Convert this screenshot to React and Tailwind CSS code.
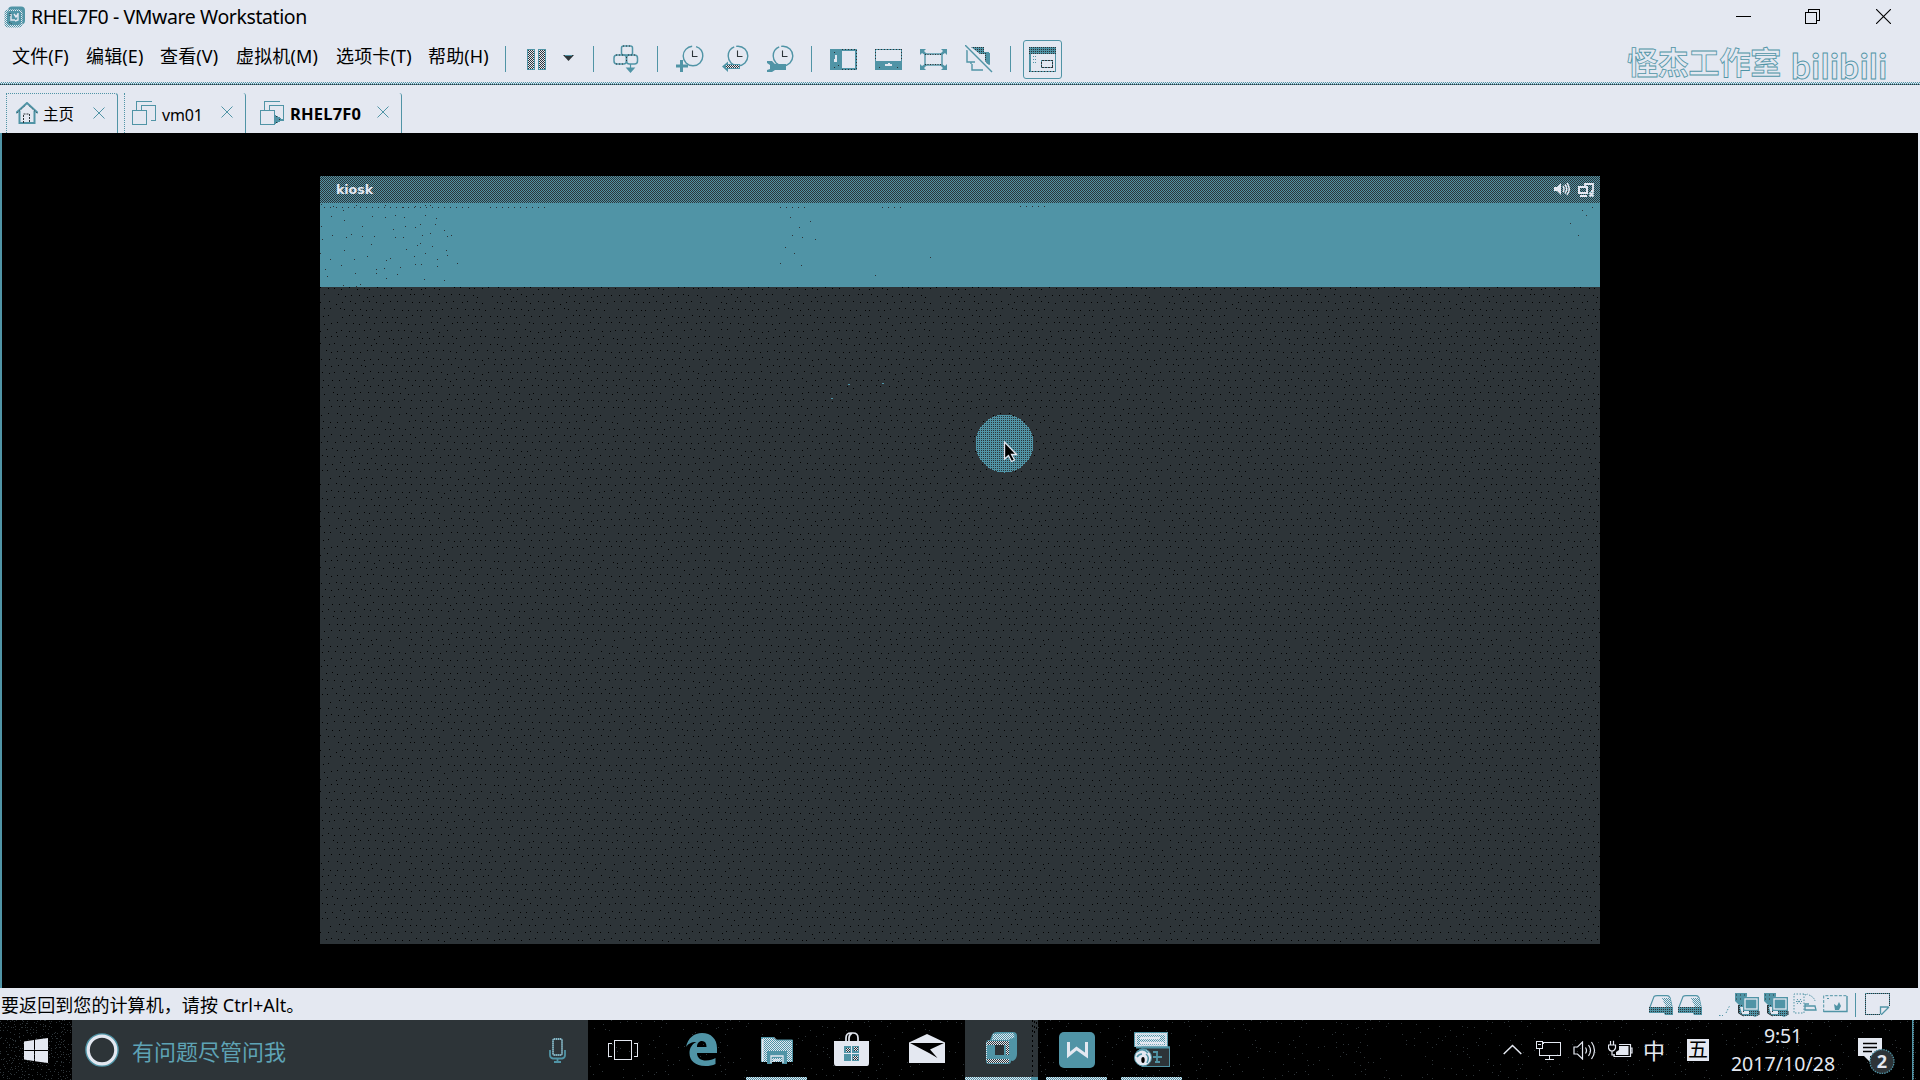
import React from "react";

const TEAL = "#5094a6";
const SLATE = "#2d3438";
const PALE = "#e4e8f1";

function Svg({ w, h, className = "", children, ...rest }) {
  return (
    <svg width={w} height={h} viewBox={`0 0 ${w} ${h}`} fill="none" className={`block shrink-0 ${className}`} {...rest}>
      {children}
    </svg>
  );
}

// Deterministic scattered specks on a jittered grid.
function speckPath(w, h, step, keep, seed, jitter) {
  let s = seed;
  const rnd = () => {
    s = (s * 1664525 + 1013904223) % 4294967296;
    return s / 4294967296;
  };
  let d = "";
  for (let y = 0; y < h; y += step) {
    for (let x = 0; x < w; x += step) {
      const shift = jitter < 0.6 && (y / step) % 2 ? step / 2 : 0;
      const px = Math.floor(x + shift + rnd() * step * jitter);
      const py = Math.floor(y + rnd() * step * jitter);
      if (rnd() < keep) d += `M${px} ${py}h1v1h-1z`;
    }
  }
  return d;
}

function Specks({ id, color, size, step, keep = 1, seed = 7, jitter = 0.8, className = "" }) {
  const d = React.useMemo(() => speckPath(size, size, step, keep, seed, jitter), [size, step, keep, seed, jitter]);
  return (
    <svg className={`pointer-events-none absolute inset-0 h-full w-full ${className}`} shapeRendering="crispEdges">
      <defs>
        <pattern id={id} width={size} height={size} patternUnits="userSpaceOnUse">
          <path d={d} fill={color} />
        </pattern>
      </defs>
      <rect width="100%" height="100%" fill={`url(#${id})`} />
    </svg>
  );
}

function SharedPatterns() {
  return (
    <svg width="0" height="0" className="absolute">
      <defs>
        <pattern id="chk-dark" width="2" height="2" patternUnits="userSpaceOnUse">
          <rect width="2" height="2" fill={PALE} />
          <path d="M0 0h1v1h-1zM1 1h1v1h-1z" fill={SLATE} />
        </pattern>
        <pattern id="chk-teal" width="2" height="2" patternUnits="userSpaceOnUse">
          <rect width="2" height="2" fill={PALE} />
          <path d="M0 0h1v1h-1zM1 1h1v1h-1z" fill={TEAL} />
        </pattern>
        <pattern id="chk-mix" width="2" height="2" patternUnits="userSpaceOnUse">
          <rect width="2" height="2" fill={TEAL} />
          <path d="M0 0h1v1h-1z" fill={SLATE} />
        </pattern>
      </defs>
    </svg>
  );
}

/* ---------- title bar ---------- */

function TitleBar() {
  return (
    <div className="flex h-9 items-start">
      <Svg w={22} h={22} className="ml-1 mt-1.5">
        <rect x="4" y="0.5" width="17" height="18" rx="4" fill={TEAL} />
        <rect x="0.5" y="3.5" width="18" height="18" rx="4" fill="url(#chk-teal)" />
        <rect x="3" y="5" width="14" height="14" rx="3" fill={TEAL} />
        <path d="M7 8v6h4M14 7v7l-3 1M10 8l2 3 2-3" stroke={PALE} strokeWidth="1.4" />
        <path d="M5 16l3 2M6 7v4" stroke={SLATE} strokeDasharray="1 1" />
      </Svg>
      <div className="ml-[5px] mt-[3px] text-[19.5px] leading-7 tracking-[-0.4px]">RHEL7F0 - VMware Workstation</div>
      <Svg w={15} h={15} className="ml-auto mt-[9px]" shapeRendering="crispEdges">
        <path d="M0 7.5h15" stroke="#000" />
      </Svg>
      <Svg w={15} h={15} className="ml-[54px] mt-[9px]" shapeRendering="crispEdges">
        <path d="M.5 3.5h11v11h-11zM3.5 3V.5h11v11H12" stroke="#000" />
      </Svg>
      <Svg w={15} h={15} className="ml-[56px] mr-[29px] mt-[9px]">
        <path d="M0 0l15 15M15 0L0 15" stroke="#000" strokeWidth="1.1" />
      </Svg>
    </div>
  );
}

/* ---------- menu + toolbar ---------- */

function Sep({ className = "" }) {
  return <div className={`h-[26px] w-px shrink-0 bg-[#5094a6] ${className}`} />;
}

function Clock({ children, dash }) {
  return (
    <Svg w={28} h={28}>
      <circle cx="17" cy="11" r="9.8" stroke={TEAL} strokeWidth="1.4" strokeDasharray={dash} />
      <path d="M16.5 5.5v6h5" stroke={SLATE} strokeWidth="1.1" />
      {children}
    </Svg>
  );
}

function MenuBar() {
  return (
    <div className="flex h-[46px] items-start">
      <div className="flex h-[40px] w-[505px] items-center whitespace-nowrap text-[18px] tracking-[0.15px]">
        <span className="ml-[12px] w-[74px]">文件(F)</span>
        <span className="w-[74px]">编辑(E)</span>
        <span className="w-[76px]">查看(V)</span>
        <span className="w-[100px]">虚拟机(M)</span>
        <span className="w-[92px]">选项卡(T)</span>
        <span>帮助(H)</span>
      </div>
      <div className="flex h-[46px] items-center">
        <Sep />
        <Svg w={20} h={21} className="ml-[21px]" shapeRendering="crispEdges">
          <rect x=".5" y=".5" width="7" height="20" fill="url(#chk-dark)" stroke={TEAL} />
          <rect x="11.5" y=".5" width="7" height="20" fill="url(#chk-dark)" stroke={TEAL} />
        </Svg>
        <Svg w={12} h={6} className="-mt-0.5 ml-4">
          <path d="M0 0h11L5.500 6z" fill={SLATE} />
          <path d="M2 .5h7" stroke={TEAL} />
        </Svg>
        <Sep className="ml-[18px]" />
        <Svg w={26} h={28} className="ml-[19px]">
          <rect x="8.500" y="1" width="11" height="9" rx="2" stroke={TEAL} strokeWidth="1.5" />
          <rect x="1" y="10" width="12.500" height="9" rx="3" stroke={TEAL} strokeWidth="1.500" />
          <rect x="13.500" y="10" width="11" height="9" rx="3" stroke={TEAL} strokeWidth="1.500" />
          <path d="M10 1h8M3 10h8M15 10h8M3 19h8M13.500 12v6" stroke={SLATE} strokeDasharray="1 2" />
          <path d="M17.500 19v6M14 23h7l-3.500 4z" stroke={TEAL} fill={TEAL} strokeWidth="1.200" />
        </Svg>
        <Sep className="ml-[18px]" />
        <div className="ml-[18px] flex gap-[17px]">
          <Clock dash="45 4 30">
            <path d="M5.500 15v12M0 21h12" stroke={TEAL} strokeWidth="3" />
          </Clock>
          <Clock dash="42 2 30">
            <path d="M1 21.500l6-5v2.500h12v5H7v3z" fill={TEAL} />
            <rect x="5" y="20" width="13" height="3" fill="url(#chk-dark)" />
          </Clock>
          <Clock dash="42 2 30">
            <path d="M1 16h5l3 3h11v6H9l-3 2H1v-2l3-1v-4l-3-2z" fill={TEAL} />
          </Clock>
        </div>
        <Sep className="ml-[17px]" />
        <Svg w={27} h={21} className="ml-[18px]" shapeRendering="crispEdges">
          <rect x="1" y="1" width="25" height="19" stroke={TEAL} strokeWidth="2" />
          <path d="M0 0h12v21H0z" fill={TEAL} />
          <path d="M12 .5h15M12 20.500h15M26.500 1v19" stroke={SLATE} strokeDasharray="1 2" />
          <path d="M6 6v7M5 10v3" stroke={PALE} strokeWidth="2" />
          <path d="M4 3h1v1h-1zM8 16h1v1h-1zM4 18h1v1h-1z" fill={SLATE} />
        </Svg>
        <Svg w={27} h={21} className="ml-[18px]" shapeRendering="crispEdges">
          <rect x=".5" y=".5" width="26" height="20" stroke={TEAL} />
          <path d="M0 12h27v9H0z" fill={TEAL} />
          <path d="M.5 0v12M26.500 0v12M0 .5h27" stroke={SLATE} strokeDasharray="1 2" />
          <path d="M10 16h7M13 15h2" stroke={PALE} strokeWidth="2" />
          <path d="M4 18h1v1h-1zM22 18h1v1h-1z" fill={SLATE} />
        </Svg>
        <Svg w={27} h={21} className="ml-[18px]">
          <path d="M0 0h6L4 2l3 3-2 1-3-2-2 2zM27 0h-6l2 2-3 3 2 1 3-2 2 2zM0 21h6l-2-2 3-3-2-1-3 2-2-2zM27 21h-6l2-2-3-3 2-1 3 2 2-2z" fill={TEAL} />
          <rect x="5" y="5" width="17" height="11" fill={PALE} stroke={TEAL} strokeWidth="1.400" />
          <path d="M5 5.500h17M5 15.500h17" stroke={SLATE} strokeDasharray="1 1.500" />
        </Svg>
        <Svg w={28} h={28} className="ml-[18px]">
          <path d="M2 5v12h4v2M7 19v6h11M10 17H3" stroke={TEAL} strokeWidth="1.400" />
          <path d="M6 2h13v5h5v13l-4-4V9h-5z" fill="url(#chk-mix)" />
          <path d="M22 8h3v12l-4-2z" fill={TEAL} />
          <path d="M0 0l27 27" stroke={PALE} strokeWidth="4" />
          <path d="M0 0l27 27" stroke={TEAL} strokeWidth="1.400" />
        </Svg>
        <Sep className="ml-[17px]" />
        <div className="ml-3 flex h-[39px] w-[39px] items-center justify-center rounded-[3px] border border-[#5094a6]">
          <Svg w={27} h={25} shapeRendering="crispEdges">
            <rect x=".75" y=".75" width="25.500" height="23.500" stroke={TEAL} strokeWidth="1.500" />
            <rect width="27" height="7" fill="url(#chk-mix)" />
            <path d="M0 24.500h27" stroke={SLATE} strokeDasharray="1 2" />
            <rect x="12.500" y="13.500" width="11" height="7" stroke={TEAL} />
            <rect x="12.500" y="13.500" width="11" height="7" stroke={SLATE} strokeDasharray="2 1" />
            <path d="M4 9h3M4 12h3M4 15h3" stroke={TEAL} strokeDasharray="1 1" />
          </Svg>
        </div>
      </div>
      <div className="ml-auto flex items-start">
        <div className="mt-[3px] whitespace-nowrap text-[31px] font-bold leading-[46px] tracking-[-0.2px] text-transparent [-webkit-text-stroke:0.8px_#5094a6]">
          怪杰工作室
        </div>
        <div className="ml-2.5 mr-[36px] mt-[9px] w-[93px] whitespace-nowrap font-[Lato] text-[35px] font-bold leading-10 tracking-[0.5px] text-transparent [-webkit-text-stroke:0.9px_#5094a6]">
          bilibili
        </div>
      </div>
    </div>
  );
}

/* ---------- tabs ---------- */

function TabClose({ className = "" }) {
  return (
    <Svg w={12} h={12} className={className}>
      <path d="M.5.5l11 11M11.500.5l-11 11" stroke={TEAL} strokeWidth="1" />
    </Svg>
  );
}

function VmIcon({ play }) {
  return (
    <Svg w={25} h={25} shapeRendering="crispEdges">
      <path d="M4.500 9V.5h15M9.500 9V4.500h14v15h-5" stroke={TEAL} />
      <rect x=".5" y="9.500" width="14" height="14" fill={PALE} stroke={TEAL} />
      {play && <path d="M14 13l9 5.500-9 5.500z" fill={TEAL} />}
      {play && <path d="M16 15h1v1h-1zM19 18h1v1h-1zM16 21h1v1h-1z" fill={SLATE} />}
    </Svg>
  );
}

function TabStrip() {
  return (
    <div className="flex h-12 items-end">
      <div className="ml-1.5 flex h-10 w-[112px] items-center rounded-tr-[3px] border-l border-r border-t border-dotted border-[#5094a6] [border-right-style:solid]">
        <Svg w={22} h={22} className="ml-[9px] -mt-0.5">
          <path d="M0 11L11 1l11 10M3.500 9v12h15V9" stroke={TEAL} strokeWidth="2" />
          <path d="M7.500 21v-9h6v9" stroke={SLATE} strokeDasharray="2 1" />
          <path d="M1 11l9-8M21 11l-9-8" stroke={SLATE} strokeWidth=".8" strokeDasharray="1 2" />
        </Svg>
        <span className="ml-[5px] mt-[3px] w-[50px] text-[15.500px]">主页</span>
        <TabClose className="-mt-0.5" />
      </div>
      <div className="ml-1.5 flex h-10 w-[122px] items-center rounded-tr-[3px] border-l border-r border-dotted border-[#5094a6] [border-right-style:solid]">
        <div className="ml-[7px] mt-px"><VmIcon /></div>
        <span className="ml-[5px] mt-[3px] w-[59px] text-[16px] tracking-[-0.2px]">vm01</span>
        <TabClose className="-mt-0.5" />
      </div>
      <div className="flex h-10 w-[156px] items-center rounded-tr-[3px] border-r border-[#5094a6]">
        <div className="ml-[14px] mt-px"><VmIcon play /></div>
        <span className="ml-[5px] mt-[3px] w-[87px] text-[16.500px] font-bold tracking-[0.2px]">RHEL7F0</span>
        <TabClose className="-mt-0.5" />
      </div>
    </div>
  );
}

/* ---------- guest screen ---------- */

function GuestScreen() {
  return (
    <div className="relative mx-auto mt-[43px] flex h-[768px] w-[1280px] flex-col overflow-hidden bg-[#2d3438]">
      <div className="flex h-[27px] shrink-0 items-center bg-[conic-gradient(#5094a6_25%,#2d3438_0_50%,#5094a6_0_75%,#2d3438_0)] bg-[length:2px_2px]">
        <span className="ml-4 mt-0.5 font-['DejaVu_Sans'] text-[12.500px] font-bold leading-none text-[#e4e8f1]">kiosk</span>
        <Svg w={16} h={14} className="-mt-px ml-auto">
          <path d="M0 5h3l4-4v12L3 9H0z" fill={PALE} />
          <path d="M9 4q2 3 0 6M11 2.500q3.500 4.500 0 9M13 1q4.500 6 0 12" stroke={PALE} strokeWidth="1.500" />
        </Svg>
        <Svg w={17} h={15} className="ml-2 mr-[5px] mt-px">
          <path d="M7 3V1h8v7h-2" stroke={PALE} strokeWidth="1.800" />
          <rect x="1" y="4" width="8" height="6" stroke={PALE} strokeWidth="2" />
          <path d="M2 13h7M11.500 9.500l4 4M15.500 9.500l-4 4" stroke={PALE} strokeWidth="2" />
        </Svg>
      </div>
      <div className="relative h-21 shrink-0 bg-[#5094a6]">
        <div className="relative h-full w-[140px]">
          <Specks id="sp-banner" color={SLATE} size={140} step={10} keep={0.62} seed={21} />
        </div>
        <Svg w={1280} h={84} className="absolute left-0 top-0" shapeRendering="crispEdges">
          <path d="M4 4.500h150M170 4.500h60M460 4.500h30M562 4.500h24M700 3.500h30" stroke={SLATE} strokeDasharray="1 5" />
          <path d="M470 14h1M479 24h1M472 32h1M482 34h1M465 44h1M474 50h1M460 60h1M481 62h1M490 18h1M495 36h1M610 54h1M555 72h1M1250 20h1M1258 32h1M1266 12h1M1272 4h1M1262 7h1" stroke={SLATE} />
        </Svg>
      </div>
      <div className="relative flex-1">
        <Specks id="sp-desk" color="#000" size={224} step={7} keep={0.97} seed={99} jitter={0.45} />
        <div className="absolute left-[655px] top-[127px]">
          <Svg w={60} h={60}>
            <circle cx="29.500" cy="29.500" r="29" fill="url(#chk-mix)" shapeRendering="crispEdges" />
            <path d="M29.500 28v17l4-3.500 3 6 3-1.500-3-5.500h5z" fill="#000" stroke={PALE} strokeWidth="1.300" />
          </Svg>
        </div>
        <Svg w={60} h={140} className="absolute left-[510px] top-[60px]" shapeRendering="crispEdges">
          <path d="M1 51h2M18 37h2M52 36h2" stroke={TEAL} />
        </Svg>
      </div>
    </div>
  );
}

/* ---------- status bar ---------- */

function Disk() {
  return (
    <Svg w={24} h={21}>
      <path d="M1 12L5 1.500Q6 .7 8 .7h10q2 0 3 2L23 12" stroke={TEAL} strokeWidth="1.200" />
      <path d="M13 3h8l2 9h-6z" fill="url(#chk-teal)" />
      <path d="M0 12h24v6H0z" fill="url(#chk-mix)" />
      <path d="M13 14h11v6h-8z" fill="url(#chk-mix)" />
    </Svg>
  );
}

function NetAdapter() {
  return (
    <Svg w={25} h={24}>
      <path d="M0 0h12v3l-2 9H4L0 8z" fill={TEAL} />
      <path d="M1 2h10M1 6h8" stroke={SLATE} strokeDasharray="1 3" />
      <path d="M3 12h6v7h8l3 4H9l-6-3z" fill="url(#chk-mix)" />
      <path d="M5 14h3v5h6v2H7z" fill={PALE} />
      <path d="M14 16h10v6l-4 2-6-3z" fill="url(#chk-mix)" />
      <path d="M8 4h16v14H8z" fill={TEAL} />
      <rect x="10" y="6" width="12" height="10" stroke={PALE} strokeWidth="1.300" />
      <path d="M3.500 12v8l5 3M24 18v4" stroke={SLATE} />
    </Svg>
  );
}

function StatusBar() {
  return (
    <div className="flex h-8 items-center">
      <div className="mt-0.5 whitespace-nowrap pl-px text-[18px] tracking-[0.08px]">要返回到您的计算机，请按 Ctrl+Alt。</div>
      <div className="ml-auto mt-0.5 flex items-center">
        <Disk />
        <div className="ml-[5px]"><Disk /></div>
        <Svg w={13} h={24} className="ml-[17px]">
          <path d="M0 22.500h4M7 20l4-8" stroke={TEAL} strokeDasharray="1.500 1.500" />
        </Svg>
        <div className="ml-[3px]"><NetAdapter /></div>
        <div className="ml-1"><NetAdapter /></div>
        <Svg w={25} h={22} className="-mt-0.5 ml-1">
          <path d="M11 1H1v19h10z" stroke={TEAL} strokeDasharray="1.500 1.500" />
          <path d="M4 6l4 5M8 6l-4 5M3 8.500h6M12 2l3-1M16 2q5 2 6 6" stroke={TEAL} strokeDasharray="1.500 1" />
          <path d="M12 13h10l1 4H12zM12 17v-6h4" stroke={TEAL} strokeWidth="1.300" />
        </Svg>
        <Svg w={25} h={18} className="-mt-0.5 ml-[5px]">
          <path d="M.7 17V.7H24" stroke={TEAL} strokeDasharray="3 1.500" />
          <path d="M.5 16.500h23.500V1" stroke={TEAL} strokeWidth="1.400" />
          <path d="M11 9l3 2 2-4 2 4-2 4h-4z" fill={TEAL} />
          <path d="M4 3.500h2" stroke={TEAL} />
        </Svg>
        <div className="ml-[7px] h-6 w-px bg-[#5094a6]" />
        <Svg w={25} h={22} className="-mt-0.5 ml-[9px] mr-[30px]" shapeRendering="crispEdges">
          <path d="M24 13V.5H.5v21H15" stroke={TEAL} />
          <path d="M24 13V.5H.5v21H15" stroke={SLATE} strokeDasharray="1 1" />
          <path d="M15.500 21v-7h8M24 14l-8 8" stroke={TEAL} strokeWidth="1.300" shapeRendering="auto" />
        </Svg>
      </div>
    </div>
  );
}

/* ---------- taskbar ---------- */

function RunLine({ className = "" }) {
  return (
    <div className={`absolute bottom-0 h-[3px] bg-[conic-gradient(#e4e8f1_25%,#5094a6_0_50%,#e4e8f1_0_75%,#5094a6_0)] bg-[length:2px_2px] ${className}`} />
  );
}

function TaskItem({ active, running, children }) {
  return (
    <div className={`relative flex h-full w-[73px] shrink-0 items-center justify-center ${active ? "bg-[#2d3438]" : ""}`}>
      {children}
      {running && <RunLine className={active ? "left-0 w-[66px]" : "left-1.5 w-[61px]"} />}
      {active && <div className="absolute bottom-0 right-0 h-[3px] w-[7px] bg-[#5094a6]" />}
    </div>
  );
}

function TaskBar() {
  return (
    <div className="relative flex h-[60px] items-center bg-black text-[#e4e8f1]">
      <Specks id="sp-task" color={SLATE} size={320} step={6} keep={0.34} seed={5} />
      <div className="relative flex h-full w-[72px] shrink-0 items-center">
        <Specks id="sp-start" color={SLATE} size={72} step={3} keep={0.62} seed={15} />
        <Svg w={24} h={25} className="relative ml-6">
          <path d="M0 3.500L10 2v10H0zM11 1.800L24 0v12H11zM0 13h10v10L0 21.500zM11 13h13v12l-13-1.800z" fill={PALE} />
        </Svg>
      </div>
      <div className="relative flex h-full w-[516px] shrink-0 items-center bg-[#2d3438]">
        <Svg w={34} h={34} className="ml-[13px]">
          <circle cx="17" cy="17" r="14.800" stroke={TEAL} strokeWidth="4" />
          <circle cx="17" cy="17" r="13.800" stroke={PALE} strokeWidth="3.200" />
        </Svg>
        <span className="ml-[13px] mt-0.5 text-[22px] text-[#5ea3b5]">有问题尽管问我</span>
        <Svg w={17} h={25} className="ml-auto mr-[22px]">
          <rect x="4" y="1" width="9" height="16" rx="1" stroke={TEAL} strokeWidth="1.400" />
          <rect x="4" y="1" width="9" height="16" rx="1" stroke={PALE} strokeDasharray="1 1" />
          <path d="M1 12v5q0 3 3 3.500h9q3-.5 3-3.500v-5M8.500 21v3M5 24h7" stroke={TEAL} strokeWidth="1.800" />
        </Svg>
      </div>
      <div className="relative flex h-full w-[75px] shrink-0 items-center justify-center">
        <Svg w={31} h={21} className="-ml-1" shapeRendering="crispEdges">
          <path d="M6.500.5h17v19h-17zM4 3.500H.5v13H4M26 3.500h3.500v13H26" stroke={PALE} />
        </Svg>
      </div>
      <div className="relative ml-0.5 flex h-full gap-0.5">
        <TaskItem>
          <Svg w={31} h={33} className="-mt-px">
            <path d="M0 14C2 5 8 0 16 0c9 0 15 6 15 15v5H11c0 5 4 7.500 9 7.500 4 0 7-1 9.500-2.500v6c-3 1.500-6 2-10 2C9 33 3.500 27.500 3.500 20 3.500 15 6 11 10.500 9 5 9 2 11 0 14zM11 14h9.500c0-4-1.500-6-4.500-6s-5 2.500-5 6z" fill={TEAL} fillRule="evenodd" />
          </Svg>
        </TaskItem>
        <TaskItem running>
          <Svg w={32} h={27} className="ml-px">
            <path d="M0 0h13l3 3h16v22H0z" fill="url(#chk-teal)" />
            <path d="M.5 25V.5H12l3 2.500h16.500v22" stroke={TEAL} />
            <path d="M6 27V14h20v13h-5v-6H11v6z" fill={TEAL} />
            <path d="M10 26v-7h12v7M13 25v-2h6" stroke={PALE} strokeWidth="1.300" />
            <path d="M1.500 2v22" stroke={PALE} strokeWidth="2" />
          </Svg>
        </TaskItem>
        <TaskItem>
          <Svg w={35} h={34} className="-ml-px -mt-0.5">
            <path d="M0 9h35v22q0 3-2 3H2q-2 0-2-3z" fill={PALE} />
            <path d="M12 10V6q0-5 5-5h2q5 0 5 5v4M15 10V6q0-3 3-5" stroke={PALE} strokeWidth="1.700" />
            <path d="M10 14h7v7h-7zM18 14h7v7h-7zM10 22h7v7h-7zM18 22h7v7h-7z" fill={TEAL} />
            <path d="M12 16h4v4h-4zM20 15h4v4h-4zM19 24h5v4h-5z" fill="url(#chk-dark)" />
          </Svg>
        </TaskItem>
        <TaskItem>
          <Svg w={36} h={29} className="-mt-[3px] ml-px">
            <path d="M0 8.500L18 0l18 8.500V29H0z" fill={PALE} />
            <path d="M1 9h34L21 15.500 28.500 24 20 19z" fill="#000" />
          </Svg>
        </TaskItem>
        <TaskItem active running>
          <Svg w={32} h={34} className="-mt-0.5">
            <path d="M6 3q1-3 5-3h16q4 0 4 4v18q0 5-4 7l-6-1V8H4z" fill={TEAL} />
            <path d="M7 2l20-1 2 4-7 3H6z" fill="url(#chk-teal)" />
            <rect x="0" y="8" width="25" height="24" rx="3" fill={TEAL} />
            <path d="M1 9h22v4H1zM20 9h3v14h-3zM1 27h22v4H1z" fill="url(#chk-dark)" />
            <path d="M.5 11v17" stroke={PALE} strokeDasharray="1 1" />
            <rect x="9" y="13" width="9" height="10" fill={SLATE} />
          </Svg>
          <Svg w={7} h={60} className="absolute right-0 top-0" shapeRendering="crispEdges">
            <path d="M1.500 0v56M3.500 1v14M5.500 2v10" stroke="#000" strokeDasharray="2 3" />
          </Svg>
        </TaskItem>
        <TaskItem running>
          <Svg w={36} h={36}>
            <rect width="36" height="36" rx="5" fill={TEAL} />
            <path d="M9.500 10v13l8-6.500 10 7V10" stroke={PALE} strokeWidth="3" />
          </Svg>
        </TaskItem>
        <TaskItem running>
          <Svg w={36} h={35} className="-mt-px">
            <rect x="0" y="0" width="34" height="15" fill="url(#chk-teal)" />
            <path d="M.5.5h33v14H.5z" stroke={TEAL} />
            <path d="M2 2h30v12H2z" stroke={PALE} strokeWidth="1.500" />
            <path d="M6 6h20M6 11h24" stroke={PALE} strokeWidth="2.500" />
            <rect x="8" y="15" width="27.500" height="19.500" fill={SLATE} stroke={TEAL} />
            <path d="M2 15.500h34M19 20h5M19 25h9M21 30h5M23 20v10" stroke={TEAL} strokeWidth="1.800" />
            <circle cx="9" cy="25.500" r="8.500" fill={PALE} stroke={TEAL} />
            <path d="M3 20q6-5 11 1M12 22q4 3 1 9M3 25q2-3 5-3" stroke={TEAL} strokeWidth="1.500" />
            <ellipse cx="9" cy="28" rx="1.700" ry="3" fill="#000" />
          </Svg>
        </TaskItem>
      </div>

      <div className="relative ml-auto flex h-full items-center">
        <Svg w={19} h={11} className="-mt-[2px]">
          <path d="M.7 10L9.500 1.500 18.300 10" stroke={PALE} strokeWidth="1.500" />
        </Svg>
        <Svg w={25} h={19} className="ml-3.5" shapeRendering="crispEdges">
          <path d="M7 2.500V1.500h17v13H3.500V8M9 18.500h9M13.500 15v3M.5.5h6v7h-6zM2 3.500h3" stroke={PALE} />
        </Svg>
        <Svg w={23} h={19} className="ml-3">
          <path d="M1 6h3.500L9.500 1v17l-5-5H1z" stroke={PALE} strokeWidth="1.200" />
          <path d="M12.500 6.500q2 3 0 6M15.500 4q4 5.500 0 11M18.500 1q6 8.500 0 17" stroke={PALE} strokeWidth="1.200" />
        </Svg>
        <Svg w={25} h={18} className="-mt-px ml-3">
          <path d="M11 3.500h11.500v12H6V13M22.500 7H24v5h-1.500" stroke={PALE} strokeWidth="1.200" />
          <path d="M11 5h9.500v9H8v-3l3-2z" fill={PALE} />
          <path d="M2.500 0v4M5.500 0v4M.5 4h7v3q-1 3-3.500 3T.5 7zM4 10v4h3" stroke={PALE} strokeWidth="1.200" />
        </Svg>
        <span className="ml-[10px] text-[22px] leading-none">中</span>
        <div className="ml-[22px] flex h-[22px] w-[22px] items-center justify-center bg-[#e4e8f1] text-[20px] leading-none text-black">五</div>
        <div className="ml-[20px] w-[108px] text-center text-[19.500px] leading-[28px]">
          <div className="tracking-[-0.2px]">9:51</div>
          <div className="whitespace-nowrap tracking-[0.05px]">2017/10/28</div>
        </div>
        <div className="ml-[21px]">
          <Svg w={37} h={36} className="mt-[12px]">
            <path d="M0 0h24v18H12v6l-6-6H0z" fill={PALE} />
            <path d="M5 5.500h14M5 9.500h14M5 13.500h9" stroke="#000" strokeWidth="1.300" />
            <circle cx="24" cy="23.500" r="12" fill={SLATE} stroke={TEAL} strokeWidth="1.300" strokeDasharray="1.500 1" />
            <text x="24" y="29.500" textAnchor="middle" fontSize="18" fontWeight="bold" fill={PALE}>2</text>
          </Svg>
        </div>
        <div className="ml-[17px] mr-[6px] h-full w-0.5 bg-[conic-gradient(#5094a6_25%,#2d3438_0_50%,#5094a6_0_75%,#5094a6_0)] bg-[length:2px_2px]" />
      </div>
    </div>
  );
}

export default function App() {
  return (
    <div className="flex h-[1080px] w-[1920px] flex-col overflow-hidden bg-[#e4e8f1] font-['Noto_Sans','Noto_Sans_CJK_SC',sans-serif] leading-normal text-black">
      <SharedPatterns />
      <TitleBar />
      <MenuBar />
      <div className="h-0.5 bg-[conic-gradient(#5094a6_25%,#e4e8f1_0_50%,#5094a6_0_75%,#e4e8f1_0)] bg-[length:2px_2px]" />
      <div className="h-px bg-[repeating-linear-gradient(90deg,#2d3438_0_1px,#5094a6_1px_2px)]" />
      <TabStrip />
      <div className="h-[855px] border-l-2 border-r-2 border-l-[#5094a6] border-r-[#e4e8f1] bg-black">
        <div className="flow-root">
          <GuestScreen />
        </div>
      </div>
      <StatusBar />
      <TaskBar />
    </div>
  );
}
